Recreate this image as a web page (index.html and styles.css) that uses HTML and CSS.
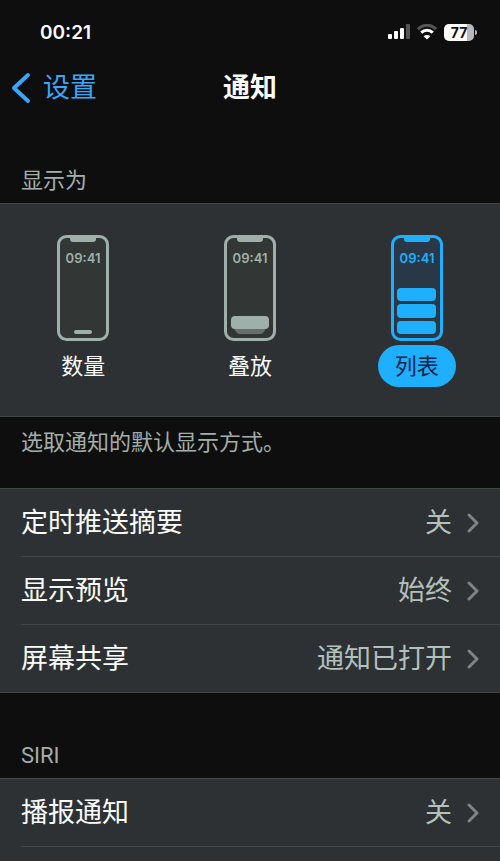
FILE: index.html
```html
<!doctype html>
<html lang="zh-CN">
  <head>
    <meta charset="UTF-8" />
    <meta name="viewport" content="width=device-width, initial-scale=1.0" />
    <title>通知</title>
    <link rel="stylesheet" href="styles.css">
  </head>
  <body>
    <div class="status-bar">
      <span class="clock">00:21</span>
      <div class="status-icons">
        <svg width="22" height="16" viewBox="0 0 22 16" aria-hidden="true">
          <rect x="0" y="10" width="4" height="5" rx="1" fill="#fff" />
          <rect x="6" y="7" width="4" height="8" rx="1" fill="#fff" />
          <rect x="12" y="4" width="4" height="11" rx="1" fill="#fff" />
          <rect x="18" y="0" width="4" height="15" rx="1" fill="#555" />
        </svg>
        <svg width="20" height="16" viewBox="0 0 20 16" aria-hidden="true">
          <path d="M1 5.2C6 -.2 14 -.2 19 5.2" fill="none" stroke="#555" stroke-width="3" />
          <path d="M4.2 8.7C7.5 5.5 12.5 5.5 15.8 8.7" fill="none" stroke="#fff" stroke-width="3" />
          <path d="M10 15.5L6.6 12.2C8.5 10.6 11.5 10.6 13.4 12.2Z" fill="#fff" />
        </svg>
        <div class="battery"><span class="battery-level">77</span></div>
      </div>
    </div>

    <header class="nav-bar">
      <a class="back" href="#">
        <svg width="20" height="32" viewBox="0 0 20 32" aria-hidden="true">
          <path d="M17 3L3 16L17 29" fill="none" stroke="currentColor" stroke-width="4" stroke-linecap="round" stroke-linejoin="round" />
        </svg>
        设置
      </a>
      <h1>通知</h1>
    </header>

    <main>
      <h2 class="section-title">显示为</h2>
      <div class="group display-options" role="radiogroup" aria-label="显示为">
        <label class="option">
          <input type="radio" name="display" value="count" />
          <svg class="phone" viewBox="0 0 52 106" aria-hidden="true">
            <rect class="phone-body" x="1.5" y="1.5" width="49" height="103" rx="8" />
            <path class="fill" d="M13 1H39V4Q39 7 36 7H16Q13 7 13 4Z" />
            <text class="phone-time" x="26" y="28">09:41</text>
            <rect class="fill" x="17" y="95" width="18" height="4" rx="2" />
          </svg>
          <span class="option-name">数量</span>
        </label>
        <label class="option">
          <input type="radio" name="display" value="stack" />
          <svg class="phone" viewBox="0 0 52 106" aria-hidden="true">
            <rect class="phone-body" x="1.5" y="1.5" width="49" height="103" rx="8" />
            <path class="fill" d="M13 1H39V4Q39 7 36 7H16Q13 7 13 4Z" />
            <text class="phone-time" x="26" y="28">09:41</text>
            <path class="stack-shadow" d="M9 92H43L39 98Q38 99 36 99H16Q14 99 13 98Z" />
            <rect class="fill" x="7" y="81" width="38" height="13" rx="4" />
          </svg>
          <span class="option-name">叠放</span>
        </label>
        <label class="option">
          <input type="radio" name="display" value="list" checked />
          <svg class="phone" viewBox="0 0 52 106" aria-hidden="true">
            <rect class="phone-body" x="1.5" y="1.5" width="49" height="103" rx="8" />
            <path class="fill" d="M13 1H39V4Q39 7 36 7H16Q13 7 13 4Z" />
            <text class="phone-time" x="26" y="28">09:41</text>
            <rect class="fill" x="6" y="53" width="39" height="13" rx="4" />
            <rect class="fill" x="6" y="69" width="39" height="14" rx="4" />
            <rect class="fill" x="6" y="86" width="39" height="13" rx="4" />
          </svg>
          <span class="option-name">列表</span>
        </label>
      </div>
      <p class="footnote">选取通知的默认显示方式。</p>

      <ul class="group">
        <li>
          <a class="row" href="#">
            <span>定时推送摘要</span>
            <span class="value">关</span>
            <svg class="chevron" viewBox="0 0 12 20" aria-hidden="true"><path d="M2 2L10 10L2 18" /></svg>
          </a>
        </li>
        <li>
          <a class="row" href="#">
            <span>显示预览</span>
            <span class="value">始终</span>
            <svg class="chevron" viewBox="0 0 12 20" aria-hidden="true"><path d="M2 2L10 10L2 18" /></svg>
          </a>
        </li>
        <li>
          <a class="row" href="#">
            <span>屏幕共享</span>
            <span class="value">通知已打开</span>
            <svg class="chevron" viewBox="0 0 12 20" aria-hidden="true"><path d="M2 2L10 10L2 18" /></svg>
          </a>
        </li>
      </ul>

      <h2 class="section-title">SIRI</h2>
      <ul class="group last">
        <li>
          <a class="row" href="#">
            <span>播报通知</span>
            <span class="value">关</span>
            <svg class="chevron" viewBox="0 0 12 20" aria-hidden="true"><path d="M2 2L10 10L2 18" /></svg>
          </a>
        </li>
        <li></li>
      </ul>
    </main>
  </body>
</html>
```
FILE: styles.css
```css
* {
  box-sizing: border-box;
}
body {
  display: flex;
  flex-direction: column;
  min-height: 100vh;
  margin: 0;
  background: #0e0e0e;
  color: #fafcfb;
  font-family: Inter, "Noto Sans CJK SC", sans-serif;
  font-size: 27px;
}
h1,
h2,
p,
ul {
  margin: 0;
  padding: 0;
}
a {
  color: inherit;
  text-decoration: none;
}

.status-bar {
  display: flex;
  align-items: center;
  justify-content: space-between;
  height: 64px;
  padding: 0 23px 0 40px;
}
.clock {
  font-size: 19px;
  font-weight: 600;
}
.status-icons {
  display: flex;
  align-items: center;
  gap: 7px;
}
.battery {
  display: flex;
  position: relative;
  width: 30px;
  height: 17px;
  margin-right: 3px;
  border-radius: 5px;
  background: linear-gradient(to right, #fff 77%, #b9b9bd 77%);
}
.battery::after {
  content: "";
  position: absolute;
  top: 6px;
  right: -3px;
  width: 2px;
  height: 5px;
  border-radius: 0 2px 2px 0;
  background: #b9b9bd;
}
.battery-level {
  width: 100%;
  color: #111;
  font-size: 14px;
  font-weight: 700;
  line-height: 17px;
  text-align: center;
}

.nav-bar {
  display: grid;
  grid-template-columns: 1fr auto 1fr;
  align-items: center;
  padding: 0 11px;
  line-height: 48px;
}
.nav-bar h1 {
  font-size: 27px;
  font-weight: 700;
}
.back {
  display: flex;
  align-items: center;
  gap: 12px;
  color: #38a6fc;
}

main {
  display: flex;
  flex: 1;
  flex-direction: column;
}
.section-title {
  padding: 53px 21px 7px;
  color: #a3aeaa;
  font-family: Roboto, "Noto Sans CJK SC", sans-serif;
  font-size: 22px;
  font-weight: 400;
  line-height: 31px;
}
.group + .section-title {
  padding-top: 47px;
}
.group {
  border-top: 1px solid #424848;
  border-bottom: 1px solid #424848;
  background: #2d3133;
  list-style: none;
}
.group.last {
  flex: 1;
  border-bottom: 0;
}

.display-options {
  display: grid;
  grid-template-columns: repeat(3, 1fr);
  padding: 31px 0 29px;
}
.option {
  display: flex;
  flex-direction: column;
  align-items: center;
  gap: 4px;
  color: #9fb0aa;
}
.option input {
  position: absolute;
  opacity: 0;
}
.phone {
  width: 52px;
  height: 106px;
}
.phone-body {
  fill: #323635;
  stroke: currentColor;
  stroke-width: 3;
}
.fill {
  fill: currentColor;
}
.stack-shadow {
  fill: #65716d;
}
.phone-time {
  fill: currentColor;
  font-size: 13px;
  font-weight: 600;
  text-anchor: middle;
}
.option-name {
  padding: 0 17px;
  border-radius: 21px;
  color: #fafcfb;
  font-size: 22px;
  line-height: 42px;
}
.option input:checked ~ .phone {
  color: #1eb0ff;
}
.option input:checked ~ .phone .phone-body {
  fill: #293847;
}
.option input:checked ~ .option-name {
  background: #1eb0ff;
  color: #0b2345;
}

.footnote {
  padding: 10px 21px 30px;
  color: #a3aeaa;
  font-size: 22px;
  line-height: 31px;
}

.group li + li::before {
  content: "";
  display: block;
  height: 1px;
  margin-left: 21px;
  background: #424848;
}
.row {
  display: flex;
  align-items: center;
  padding: 1px 21px 0;
  line-height: 66px;
}
.value {
  margin-left: auto;
  color: #b3c0bb;
}
.chevron {
  width: 12px;
  height: 20px;
  margin-left: 15px;
  fill: none;
  stroke: #7c8583;
  stroke-width: 3;
  stroke-linecap: round;
  stroke-linejoin: round;
}
```
